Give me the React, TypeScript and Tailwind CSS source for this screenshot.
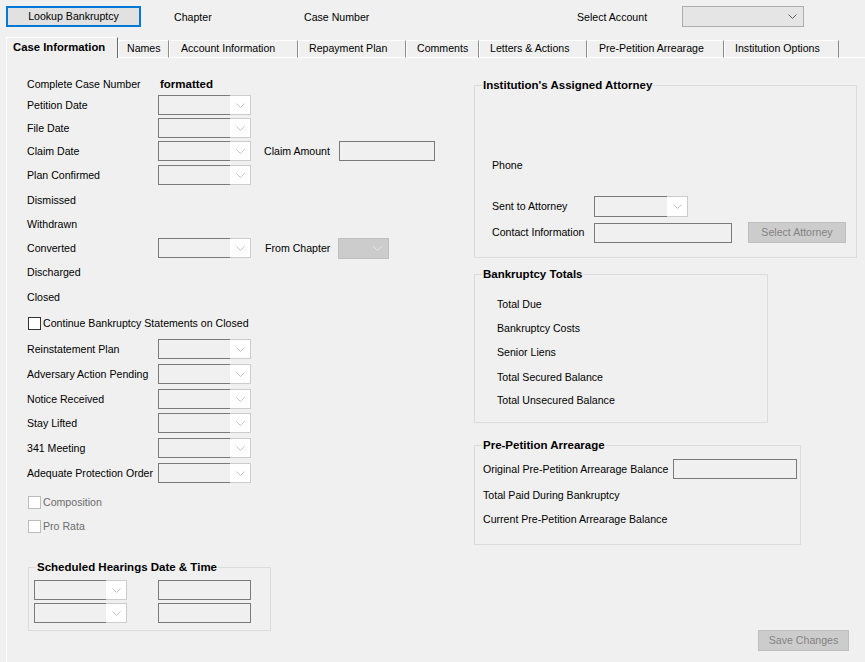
import React from "react";

const Chevron = ({ color = "#c4c4c4" }: { color?: string }) => (
  <svg width="9" height="5" viewBox="0 0 9 5" fill="none">
    <path d="M0.5 0.5L4.5 4.5L8.5 0.5" stroke={color} strokeWidth="1" />
  </svg>
);

function DateBox({ className = "w-[93px] h-[20px]" }: { className?: string }) {
  return (
    <div className={`flex ${className}`}>
      <div className="flex-1 border border-r-0 border-[#7a7a7a] bg-[#f0f0f0]" />
      <div className="flex w-[21px] items-center justify-center border border-l-0 border-[#cccccc] bg-white">
        <Chevron />
      </div>
    </div>
  );
}

function TextBox({ className = "" }: { className?: string }) {
  return <div className={`border border-[#7a7a7a] bg-[#f0f0f0] ${className}`} />;
}

function CheckBox({ label, disabled = false }: { label: string; disabled?: boolean }) {
  return (
    <div className="ml-[1px] flex items-center gap-[2px]">
      <div
        className={
          disabled
            ? "h-[13px] w-[13px] border border-[#bcbcbc] bg-white"
            : "h-[13px] w-[13px] border border-[#333333] bg-white"
        }
      />
      <span className={disabled ? "text-[#6d6d6d]" : "text-black"}>{label}</span>
    </div>
  );
}

const tabs = [
  { label: "Names", w: "w-[51px] pl-[8px]" },
  { label: "Account Information", w: "w-[129px] pl-[11px]" },
  { label: "Repayment Plan", w: "w-[108px] pl-[10px]" },
  { label: "Comments", w: "w-[73px] pl-[10px]" },
  { label: "Letters & Actions", w: "w-[108px] pl-[10px]" },
  { label: "Pre-Petition Arrearage", w: "w-[137px] pl-[11px]" },
  { label: "Institution Options", w: "w-[115px] pl-[10px]" },
];

export default function App() {
  return (
    <div className="flex h-[662px] w-[865px] flex-col overflow-hidden bg-[#f0f0f0] font-['Liberation_Sans',Arial,sans-serif] text-[10.6px] leading-[13px] text-black">
      {/* Top bar */}
      <div className="ml-[6px] mt-[6px] flex h-[21px] items-center">
        <button className="flex h-[21px] w-[135px] items-center justify-center border-2 border-[#0078d7] bg-[#e1e1e1] text-black">
          Lookup Bankruptcy
        </button>
        <span className="ml-[33px] mt-[2px] w-[130px]">Chapter</span>
        <span className="mt-[2px] w-[273px]">Case Number</span>
        <span className="mt-[2px] w-[105px]">Select Account</span>
        <div className="flex h-[21px] w-[122px] items-center justify-end border border-[#adadad] bg-[#e5e5e5] pr-[6px]">
          <Chevron color="#606060" />
        </div>
      </div>

      {/* Tabs */}
      <div className="ml-[6px] mt-[10px] flex h-[21px] items-end">
        <div className="flex h-[21px] w-[112px] items-center justify-start border-l border-t border-r border-l-white border-t-white border-r-[#696969] bg-[#f0f0f0] pb-[1px] pl-[6px] text-[11.3px] font-bold">
          Case Information
        </div>
        {tabs.map((t) => (
          <div
            key={t.label}
            className={`flex h-[18px] ${t.w} items-center justify-start whitespace-nowrap border-b border-l border-r border-t border-b-white border-l-white border-r-[#8c8c8c] border-t-white bg-[#f0f0f0] pb-[2px]`}
          >
            {t.label}
          </div>
        ))}
        <div className="h-[1px] flex-1 bg-white" />
      </div>

      {/* Panel */}
      <div className="ml-[6px] flex flex-1 border-l border-white">
        {/* Left column */}
        <div className="flex w-[467px] flex-col pl-[20px]">
          <div className="mt-[16px] flex h-[20px] items-center">
            <span className="w-[133px]">Complete Case Number</span>
            <span className="text-[11.5px] font-bold">formatted</span>
          </div>
          <div className="mt-[1px] flex h-[20px] items-center">
            <span className="w-[131px]">Petition Date</span>
            <DateBox />
          </div>
          <div className="mt-[3px] flex h-[20px] items-center">
            <span className="w-[131px]">File Date</span>
            <DateBox />
          </div>
          <div className="mt-[3px] flex h-[20px] items-center">
            <span className="w-[131px]">Claim Date</span>
            <DateBox />
            <span className="ml-[13px] w-[75px]">Claim Amount</span>
            <TextBox className="h-[20px] w-[96px]" />
          </div>
          <div className="mt-[4px] flex h-[20px] items-center">
            <span className="w-[131px]">Plan Confirmed</span>
            <DateBox />
          </div>
          <div className="mt-[5px] flex h-[20px] items-center">Dismissed</div>
          <div className="mt-[4px] flex h-[20px] items-center">Withdrawn</div>
          <div className="mt-[4px] flex h-[20px] items-center">
            <span className="w-[131px]">Converted</span>
            <DateBox />
            <span className="ml-[14px] w-[73px]">From Chapter</span>
            <div className="flex h-[21px] w-[51px] items-center justify-end border border-[#bfbfbf] bg-[#cccccc] pr-[6px]">
              <Chevron color="#e6e6e6" />
            </div>
          </div>
          <div className="mt-[4px] flex h-[20px] items-center">Discharged</div>
          <div className="mt-[5px] flex h-[20px] items-center">Closed</div>
          <div className="mt-[6px] flex h-[20px] items-center">
            <CheckBox label="Continue Bankruptcy Statements on Closed" />
          </div>
          <div className="mt-[6px] flex h-[20px] items-center">
            <span className="w-[131px]">Reinstatement Plan</span>
            <DateBox />
          </div>
          <div className="mt-[5px] flex h-[20px] items-center">
            <span className="w-[131px]">Adversary Action Pending</span>
            <DateBox />
          </div>
          <div className="mt-[5px] flex h-[20px] items-center">
            <span className="w-[131px]">Notice Received</span>
            <DateBox />
          </div>
          <div className="mt-[4px] flex h-[20px] items-center">
            <span className="w-[131px]">Stay Lifted</span>
            <DateBox />
          </div>
          <div className="mt-[5px] flex h-[20px] items-center">
            <span className="w-[131px]">341 Meeting</span>
            <DateBox />
          </div>
          <div className="mt-[5px] flex h-[20px] items-center">
            <span className="w-[131px] whitespace-nowrap">Adequate Protection Order</span>
            <DateBox />
          </div>
          <div className="mt-[9px] flex h-[20px] items-center">
            <CheckBox label="Composition" disabled />
          </div>
          <div className="mt-[4px] flex h-[20px] items-center">
            <CheckBox label="Pro Rata" disabled />
          </div>

          <fieldset className="ml-[1px] mt-[24px] h-[71px] w-[243px] border border-[#dcdcdc]">
            <legend className="ml-[7px] px-[1px] text-[11.5px] font-bold leading-[14px]">
              Scheduled Hearings Date &amp; Time
            </legend>
            <div className="flex flex-col pl-[5px]">
              <div className="mt-[6px] flex items-center">
                <DateBox />
                <TextBox className="ml-[31px] h-[20px] w-[93px]" />
              </div>
              <div className="mt-[3px] flex items-center">
                <DateBox />
                <TextBox className="ml-[31px] h-[20px] w-[93px]" />
              </div>
            </div>
          </fieldset>
        </div>

        {/* Right column */}
        <div className="flex w-[383px] flex-col">
          <fieldset className="mt-[20px] h-[180px] w-[383px] border border-[#dcdcdc]">
            <legend className="ml-[7px] px-[1px] text-[11.5px] font-bold leading-[14px]">
              Institution's Assigned Attorney
            </legend>
            <div className="flex flex-col pl-[17px]">
              <div className="mt-[63px] flex h-[20px] items-center">Phone</div>
              <div className="mt-[21px] flex h-[21px] items-center">
                <span className="w-[102px]">Sent to Attorney</span>
                <DateBox className="h-[21px] w-[94px]" />
              </div>
              <div className="mt-[5px] flex h-[21px] items-center">
                <span className="w-[102px]">Contact Information</span>
                <TextBox className="h-[20px] w-[138px]" />
                <div className="ml-[16px] flex h-[21px] w-[98px] items-center justify-center border border-[#bfbfbf] bg-[#cccccc] text-[#838383]">
                  Select Attorney
                </div>
              </div>
            </div>
          </fieldset>

          <fieldset className="mt-[9px] h-[156px] w-[294px] border border-[#dcdcdc]">
            <legend className="ml-[7px] px-[1px] text-[11.5px] font-bold leading-[14px]">
              Bankruptcy Totals
            </legend>
            <div className="flex flex-col pl-[22px]">
              <div className="mt-[13px] flex h-[20px] items-center">Total Due</div>
              <div className="mt-[4px] flex h-[20px] items-center">Bankruptcy Costs</div>
              <div className="mt-[4px] flex h-[20px] items-center">Senior Liens</div>
              <div className="mt-[5px] flex h-[20px] items-center">Total Secured Balance</div>
              <div className="mt-[3px] flex h-[20px] items-center">Total Unsecured Balance</div>
            </div>
          </fieldset>

          <fieldset className="mt-[15px] h-[107px] w-[327px] border border-[#dcdcdc]">
            <legend className="ml-[7px] px-[1px] text-[11.5px] font-bold leading-[14px]">
              Pre-Petition Arrearage
            </legend>
            <div className="flex flex-col pl-[8px]">
              <div className="mt-[7px] flex h-[20px] items-center">
                <span className="w-[190px]">Original Pre-Petition Arrearage Balance</span>
                <TextBox className="h-[20px] w-[124px]" />
              </div>
              <div className="mt-[6px] flex h-[20px] items-center">Total Paid During Bankruptcy</div>
              <div className="mt-[4px] flex h-[20px] items-center">Current Pre-Petition Arrearage Balance</div>
            </div>
          </fieldset>

          <div className="ml-[284px] mt-[85px] flex h-[21px] w-[91px] items-center justify-center border border-[#bfbfbf] bg-[#cccccc] text-[#838383]">
            Save Changes
          </div>
        </div>
      </div>
    </div>
  );
}
